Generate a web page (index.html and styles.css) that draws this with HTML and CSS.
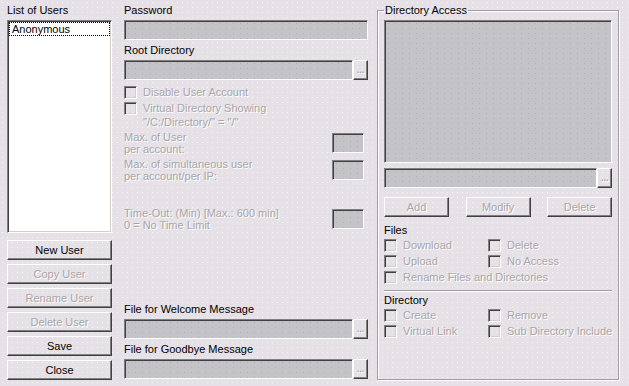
FILE: index.html
```html
<!DOCTYPE html>
<html lang="en">
<head>
    <meta charset="UTF-8">
    <title>User Accounts</title>
    <link rel="stylesheet" href="styles.css">
</head>
<body>
    <div class="dialog">
        <!-- left: user list -->
        <div class="users">
            <div class="label">List of Users</div>
            <div class="listbox">
                <div class="item">Anonymous</div>
            </div>
            <div class="user-buttons">
                <button class="btn">New User</button>
                <button class="btn off">Copy User</button>
                <button class="btn off">Rename User</button>
                <button class="btn off">Delete User</button>
                <button class="btn">Save</button>
                <button class="btn">Close</button>
            </div>
        </div>

        <!-- middle: account settings -->
        <div class="account">
            <div class="label">Password</div>
            <div class="field"></div>
            <div class="label spaced">Root Directory</div>
            <div class="browse">
                <div class="field"></div>
                <button class="dots">...</button>
            </div>
            <div class="options">
                <div class="opt"><span class="check"></span>Disable User Account</div>
                <div class="opt"><span class="check"></span>Virtual Directory Showing</div>
                <div class="note">"/C:/Directory/" = "/"</div>
            </div>
            <div class="limit first">
                <div class="limit-text">Max. of User<br>per account:</div>
                <div class="field small"></div>
            </div>
            <div class="limit">
                <div class="limit-text">Max. of simultaneous user<br>per account/per IP:</div>
                <div class="field small"></div>
            </div>
            <div class="limit timeout">
                <div class="limit-text">Time-Out: (Min) [Max.: 600 min]<br>0 = No Time Limit</div>
                <div class="field small"></div>
            </div>
            <div class="label welcome">File for Welcome Message</div>
            <div class="browse">
                <div class="field"></div>
                <button class="dots">...</button>
            </div>
            <div class="label spaced">File for Goodbye Message</div>
            <div class="browse">
                <div class="field"></div>
                <button class="dots">...</button>
            </div>
        </div>

        <!-- right: directory access -->
        <fieldset class="access">
            <legend>Directory Access</legend>
            <div class="field dirlist"></div>
            <div class="browse path">
                <div class="field"></div>
                <button class="dots">...</button>
            </div>
            <div class="actions">
                <button class="btn off">Add</button>
                <button class="btn off">Modify</button>
                <button class="btn off">Delete</button>
            </div>
            <div class="section">Files</div>
            <div class="grid">
                <div class="opt"><span class="check"></span>Download</div>
                <div class="opt"><span class="check"></span>Delete</div>
                <div class="opt"><span class="check"></span>Upload</div>
                <div class="opt"><span class="check"></span>No Access</div>
                <div class="opt wide"><span class="check"></span>Rename Files and Directories</div>
            </div>
            <div class="sep"></div>
            <div class="section tight">Directory</div>
            <div class="grid">
                <div class="opt"><span class="check"></span>Create</div>
                <div class="opt"><span class="check"></span>Remove</div>
                <div class="opt"><span class="check"></span>Virtual Link</div>
                <div class="opt"><span class="check"></span>Sub Directory Include</div>
            </div>
        </fieldset>
    </div>
</body>
</html>
```

FILE: styles.css
```css
body {
    margin: 0;
    font: 11px "Liberation Sans", Arial, sans-serif;
    color: #000;
    background-color: #e6e1e6;
    background-image: radial-gradient(circle, rgba(255, 255, 255, 0.6) 0.6px, transparent 0.9px);
    background-size: 5px 5px;
}
.dialog {
    display: flex;
    height: 386px;
    box-sizing: border-box;
    padding: 4px 0 0 7px;
}
.label {
    line-height: 13px;
    height: 13px;
    margin-bottom: 3px;
    white-space: nowrap;
}
.label.spaced {
    margin-top: 4px;
}

/* left column */
.users {
    width: 105px;
    display: flex;
    flex-direction: column;
}
.listbox {
    height: 213px;
    box-sizing: border-box;
    background: #fff;
    border: 1px solid;
    border-color: #808080 #fff #fff #808080;
    box-shadow: inset 1px 1px #404040, inset -1px -1px #d4d0c8;
    padding: 1px 1px;
}
.item {
    border: 1px dotted #000;
    line-height: 12px;
    padding: 0 2px;
}
.user-buttons {
    margin-top: 7px;
    display: flex;
    flex-direction: column;
    gap: 4px;
}
.btn {
    height: 20px;
    box-sizing: border-box;
    background: transparent;
    border: 1px solid;
    border-color: #fff #404040 #404040 #fff;
    box-shadow: inset -1px -1px #808080;
    font: inherit;
    color: #000;
    padding: 0;
    text-align: center;
}
.btn.off, .dots {
    color: #a8a5a8;
    text-shadow: 1px 1px #fff;
}

/* middle column */
.account {
    width: 244px;
    margin-left: 12px;
    display: flex;
    flex-direction: column;
}
.field {
    height: 20px;
    box-sizing: border-box;
    background-color: #c4c3c7;
    background-image: radial-gradient(circle, rgba(150, 150, 160, 0.45) 0.5px, transparent 0.8px);
    background-size: 7px 5px;
    border: 1px solid;
    border-color: #808080 #fff #fff #808080;
    box-shadow: inset 1px 1px #404040;
}
.browse {
    display: flex;
}
.browse .field {
    flex: 1;
}
.dots {
    width: 15px;
    height: 20px;
    box-sizing: border-box;
    background: transparent;
    border: 1px solid;
    border-color: #fff #404040 #404040 #fff;
    box-shadow: inset -1px -1px #808080;
    font: bold 9px "Liberation Sans", Arial, sans-serif;
    padding: 0;
    line-height: 16px;
}
.options {
    margin-top: 4px;
}
.opt {
    display: flex;
    align-items: center;
    height: 16px;
    gap: 6px;
    color: #a8a5a8;
    text-shadow: 1px 1px #fff;
    white-space: nowrap;
}
.check {
    width: 13px;
    height: 13px;
    flex: none;
    box-sizing: border-box;
    border: 1px solid;
    border-color: #808080 #fff #fff #808080;
    box-shadow: inset 1px 1px #404040, inset -1px -1px #d4d0c8;
}
.note {
    margin-left: 19px;
    line-height: 13px;
    color: #a8a5a8;
    text-shadow: 1px 1px #fff;
}
.limit {
    display: flex;
    justify-content: space-between;
    height: 24px;
    margin-top: 3px;
}
.limit.first {
    margin-top: 2px;
}
.limit.timeout {
    margin-top: 25px;
}
.limit-text {
    line-height: 12px;
    color: #a8a5a8;
    text-shadow: 1px 1px #fff;
    white-space: nowrap;
}
.field.small {
    width: 32px;
    margin: 2px 4px 0 0;
}
.label.welcome {
    margin-top: 72px;
}

/* right group */
.access {
    margin: 0 0 0 9px;
    width: 242px;
    height: 376px;
    box-sizing: border-box;
    padding: 3px 6px 0;
    border: 1px solid #a09ca0;
    box-shadow: inset 1px 1px #fff, 1px 1px #fff;
}
.access legend {
    padding: 0 1px;
    line-height: 13px;
}
.dirlist {
    height: 143px;
}
.path {
    margin-top: 5px;
}
.actions {
    display: flex;
    justify-content: space-between;
    margin-top: 9px;
}
.actions .btn {
    width: 65px;
}
.section {
    margin-top: 7px;
    line-height: 13px;
}
.section.tight {
    margin-top: 2px;
}
.grid {
    display: grid;
    grid-template-columns: 104px 1fr;
}
.grid .wide {
    grid-column: 1 / 3;
}
.sep {
    margin-top: 5px;
    border-top: 1px solid #a09ca0;
    border-bottom: 1px solid #fff;
}
```
